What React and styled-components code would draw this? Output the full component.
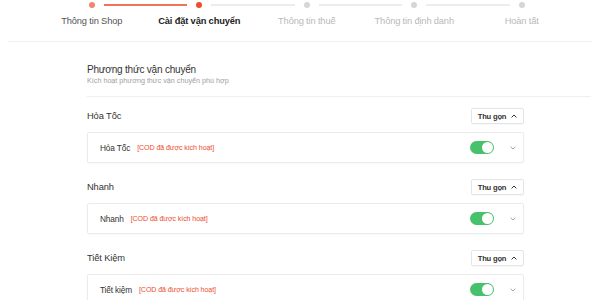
import React from "react";
import styled, { createGlobalStyle } from "styled-components";

const Global = createGlobalStyle`
  html, body { margin: 0; padding: 0; background: #fff; }
  body { font-family: "Liberation Sans", Arial, sans-serif; color: #333; }
`;

const Header = styled.div`
  height: 41px;
  margin: 0 8px;
  border-bottom: 1px solid #f0f0f0;
  display: flex;
  padding-left: 30px;
`;

const Step = styled.div`
  width: 107.5px;
  display: flex;
  flex-direction: column;
  align-items: center;
`;

const DotRow = styled.div`
  width: 100%;
  height: 10px;
  display: flex;
  align-items: center;
`;

const Line = styled.div`
  flex: 1;
  height: 2px;
  background: ${(p) => (p.$hidden ? "transparent" : p.$done ? "#f0735a" : "#ececec")};
  margin: ${(p) => (p.$side === "left" ? "0 9px 0 0" : "0 0 0 9px")};
`;

const Dot = styled.div`
  width: 6px;
  height: 6px;
  border-radius: 50%;
  background: ${(p) => p.$color};
`;

const StepLabel = styled.div`
  margin-top: 6px;
  font-size: 9.3px;
  letter-spacing: -0.15px;
  white-space: nowrap;
  color: ${(p) => p.$color};
  font-weight: ${(p) => (p.$active ? 700 : 400)};
`;

const Main = styled.div`
  padding: 21px 9px 0 87px;
`;

const Title = styled.div`
  font-size: 10px;
  line-height: 13px;
  letter-spacing: -0.2px;
  color: #333;
`;

const Subtitle = styled.div`
  font-size: 7.2px;
  line-height: 10px;
  color: #a0a0a0;
`;

const Divider = styled.div`
  height: 1px;
  background: #efefef;
  margin-top: 10px;
`;

const Section = styled.div`
  width: 437px;
  margin-top: ${(p) => (p.$first ? "11px" : "16px")};
`;

const SectionHead = styled.div`
  display: flex;
  align-items: center;
  justify-content: space-between;
  height: 16px;
`;

const SectionName = styled.div`
  font-size: 9.3px;
  color: #333;
  letter-spacing: -0.1px;
`;

const CollapseBtn = styled.button`
  width: 53px;
  height: 16px;
  border: 1px solid #e5e5e5;
  border-radius: 2px;
  background: #fff;
  display: flex;
  align-items: center;
  justify-content: center;
  gap: 5px;
  padding: 0;
  font-family: inherit;
  font-size: 7.6px;
  font-weight: 700;
  color: #333;
  letter-spacing: -0.2px;
  box-shadow: 0 1px 1px rgba(0,0,0,0.03);
`;

const Card = styled.div`
  margin-top: 8px;
  height: 31px;
  box-sizing: border-box;
  border: 1px solid #ebebeb;
  border-radius: 2px;
  display: flex;
  align-items: center;
  padding: 0 7px 0 12px;
  box-shadow: 0 1px 2px rgba(0,0,0,0.03);
`;

const CardName = styled.span`
  font-size: 8.3px;
  color: #333;
  letter-spacing: -0.15px;
`;

const CodTag = styled.span`
  margin-left: 7px;
  font-size: 7.1px;
  color: #ee4d2d;
  letter-spacing: -0.1px;
  flex: 1;
`;

const Toggle = styled.div`
  width: 24px;
  height: 13px;
  border-radius: 7px;
  background: #47c16b;
  display: flex;
  align-items: center;
  justify-content: flex-end;
  padding: 1px;
  box-sizing: border-box;
`;

const Knob = styled.div`
  width: 11px;
  height: 11px;
  border-radius: 50%;
  background: #fff;
`;

const ChevronWrap = styled.div`
  width: 22px;
  display: flex;
  justify-content: flex-end;
`;

const steps = [
  { label: "Thông tin Shop", dot: "#f3866f", color: "#555" },
  { label: "Cài đặt vận chuyển", dot: "#ee4d2d", color: "#222", active: true },
  { label: "Thông tin thuế", dot: "#d6d6d6", color: "#b9b9b9" },
  { label: "Thông tin định danh", dot: "#d6d6d6", color: "#b9b9b9" },
  { label: "Hoàn tất", dot: "#d6d6d6", color: "#b9b9b9" },
];

const sections = [
  { name: "Hỏa Tốc", item: "Hỏa Tốc" },
  { name: "Nhanh", item: "Nhanh" },
  { name: "Tiết Kiệm", item: "Tiết kiệm" },
];

const ChevronUp = () => (
  <svg width="6" height="4" viewBox="0 0 6 4">
    <polyline points="0.6,3.4 3,1 5.4,3.4" fill="none" stroke="#333" strokeWidth="1" />
  </svg>
);

const ChevronDown = () => (
  <svg width="6" height="4" viewBox="0 0 6 4">
    <polyline points="0.6,0.8 3,3 5.4,0.8" fill="none" stroke="#999" strokeWidth="0.9" />
  </svg>
);

export default function App() {
  return (
    <>
      <Global />
      <Header>
        {steps.map((s, i) => (
          <Step key={s.label}>
            <DotRow>
              <Line $side="left" $hidden={i === 0} $done={i <= 1} />
              <Dot $color={s.dot} />
              <Line $side="right" $hidden={i === steps.length - 1} $done={i < 1} />
            </DotRow>
            <StepLabel $color={s.color} $active={s.active}>{s.label}</StepLabel>
          </Step>
        ))}
      </Header>
      <Main>
        <Title>Phương thức vận chuyển</Title>
        <Subtitle>Kích hoạt phương thức vận chuyển phù hợp</Subtitle>
        <Divider />
        {sections.map((s, i) => (
          <Section key={s.name} $first={i === 0}>
            <SectionHead>
              <SectionName>{s.name}</SectionName>
              <CollapseBtn>
                Thu gọn <ChevronUp />
              </CollapseBtn>
            </SectionHead>
            <Card>
              <CardName>{s.item}</CardName>
              <CodTag>[COD đã được kích hoạt]</CodTag>
              <Toggle><Knob /></Toggle>
              <ChevronWrap><ChevronDown /></ChevronWrap>
            </Card>
          </Section>
        ))}
      </Main>
    </>
  );
}
